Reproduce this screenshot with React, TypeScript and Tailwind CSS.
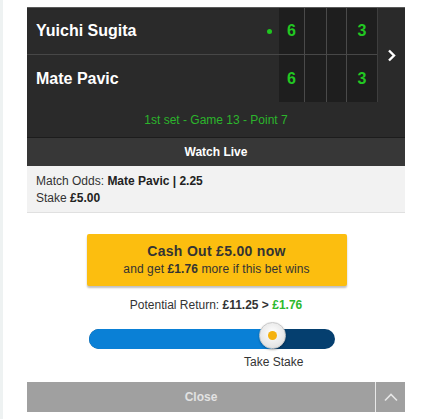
import React from 'react';

const font = { fontFamily: '"Liberation Sans", Arial, sans-serif' };

function ScoreRow({ name, serving, first }: { name: string; serving?: boolean; first?: boolean }) {
  return (
    <div className={`flex h-[47px] ${first ? 'border-b border-[#474747]' : ''}`}>
      <div className="flex-1 flex items-center pl-[9px] text-white font-bold text-[16px]">{name}</div>
      <div className="w-[20px] flex items-center justify-center">
        {serving && <span className="w-[5px] h-[5px] rounded-full bg-[#1fc61f]" />}
      </div>
      <div className="w-[25px] bg-[#1e1e1e] flex items-center justify-center text-[#22c722] font-bold text-[16px]">6</div>
      <div className="w-[22px] bg-[#1e1e1e] border-l border-[#4a4a4a]" />
      <div className="w-[20px] bg-[#1e1e1e] border-l border-[#4a4a4a]" />
      <div className="w-[31px] bg-[#1e1e1e] border-l border-[#4a4a4a] flex items-center justify-center text-[#22c722] font-bold text-[16px]">3</div>
    </div>
  );
}

export default function App() {
  return (
    <div className="w-[437px] h-[419px] bg-white overflow-hidden flex" style={font}>
      <div className="w-[3px] bg-[#eef2f2]" />
      <div className="pl-[24px] pt-[7px] w-[402px]">
        {/* scoreboard */}
        <div className="bg-[#2a2a2a] border-t border-[#5a5a5a]">
          <div className="flex">
            <div className="flex-1 border-r border-[#3e3e3e]">
              <ScoreRow name="Yuichi Sugita" serving first />
              <ScoreRow name="Mate Pavic" />
            </div>
            <div className="w-[27px] flex items-center justify-center">
              <svg width="9" height="13" viewBox="0 0 9 13" fill="none">
                <path d="M2 1.5 L7 6.5 L2 11.5" stroke="white" strokeWidth="2.4" />
              </svg>
            </div>
          </div>
          <div className="h-[35px] flex items-center justify-center text-[12px] text-[#2cb52c]">
            1st set - Game 13 - Point 7
          </div>
        </div>
        <div className="h-[29px] bg-[#373737] border-t border-[#1c1c1c] flex items-center justify-center text-white font-bold text-[12px]">
          Watch Live
        </div>
        <div className="h-[47px] bg-[#f2f2f2] border-b border-[#e0e0e0] px-[9px] pt-[7px] text-[12px] leading-[17px] text-[#333]">
          <div>Match Odds: <b className="text-[#222]">Mate Pavic | 2.25</b></div>
          <div>Stake <b className="text-[#222]">£5.00</b></div>
        </div>

        {/* cash out */}
        <div className="flex flex-col items-center">
          <button className="mt-[21px] ml-[1px] w-[260px] h-[52px] rounded-[2px] bg-[#fcbe0f] shadow-[0_2px_2px_rgba(0,0,0,0.25)] flex flex-col items-center justify-center text-[#333]">
            <span className="font-bold text-[14px] leading-[17px] tracking-[0.3px]">Cash Out £5.00 now</span>
            <span className="text-[12px] leading-[16px] mt-[1px] tracking-[0.1px]">and get <b>£1.76</b> more if this bet wins</span>
          </button>
          <div className="mt-[10px] text-[12px] text-[#333]">
            Potential Return: <b>£11.25 &gt; <span className="text-[#2db92d]">£1.76</span></b>
          </div>
          <div className="relative mt-[15px] ml-[62px] w-[246px] h-[20px] rounded-full bg-[#053f6f] self-start">
            <div className="h-full w-[183px] rounded-l-full bg-[#0a80d6]" />
            <div className="absolute left-[170px] top-[-7px] w-[27px] h-[27px] rounded-full bg-[radial-gradient(circle_at_50%_40%,#ffffff,#d9d9d9)] border border-[#c8c8c8] shadow-[0_1px_2px_rgba(0,0,0,0.3)] flex items-center justify-center">
              <span className="w-[9px] h-[9px] rounded-full bg-[#f5b20f]" />
            </div>
          </div>
          <div className="self-start ml-[217px] mt-[4px] text-[12px] text-[#333]">Take Stake</div>
        </div>

        {/* close */}
        <div className="mt-[11px] h-[30px] bg-[#a0a0a0] flex">
          <div className="flex-1 flex items-center justify-center text-[#e2e2e2] font-bold text-[12px]">Close</div>
          <div className="w-[30px] border-l border-[#e8e8e8] flex items-center justify-center">
            <svg width="14" height="9" viewBox="0 0 14 9" fill="none">
              <path d="M1 7.5 L7 1.5 L13 7.5" stroke="#e6e6e6" strokeWidth="1.6" />
            </svg>
          </div>
        </div>
      </div>
    </div>
  );
}
